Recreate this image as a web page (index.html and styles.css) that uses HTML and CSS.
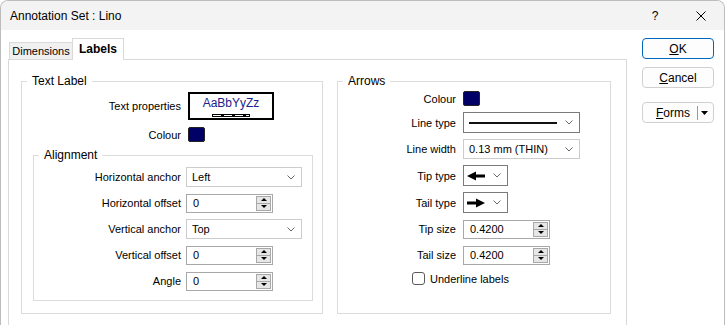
FILE: index.html
```html
<!DOCTYPE html>
<html lang="en">
<head>
    <meta charset="UTF-8">
    <title>Annotation Set : Lino</title>
    <link rel="stylesheet" href="styles.css">
</head>
<body>
    <div class="window">
        <div class="titlebar">
            <span class="title">Annotation Set : Lino</span>
            <span class="caption-btn">?</span>
            <span class="caption-btn">
                <svg width="10" height="10" viewBox="0 0 10 10"><path d="M0.5 0.5L9.5 9.5M9.5 0.5L0.5 9.5" stroke="#000" stroke-width="1"/></svg>
            </span>
        </div>

        <div class="content">
            <div class="tabs">
                <div class="tab-strip">
                    <div class="tab">Dimensions</div>
                    <div class="tab active">Labels</div>
                </div>

                <div class="tab-panel">
                    <!-- Text label group -->
                    <fieldset class="group text-label">
                        <legend>Text Label</legend>
                        <div class="row sample-row">
                            <label>Text properties</label>
                            <div class="font-sample">
                                <span>AaBbYyZz</span>
                                <span class="sample-bar"></span>
                            </div>
                        </div>
                        <div class="row colour-row">
                            <label>Colour</label>
                            <span class="swatch"></span>
                        </div>

                        <fieldset class="group alignment">
                            <legend>Alignment</legend>
                            <div class="form">
                                <div class="row">
                                    <label>Horizontal anchor</label>
                                    <div class="combo anchor"><span class="value">Left</span><svg class="chev" width="8" height="5" viewBox="0 0 8 5"><polyline points="0.5,0.5 4,4 7.5,0.5" fill="none" stroke="#666"/></svg></div>
                                </div>
                                <div class="row">
                                    <label>Horizontal offset</label>
                                    <div class="spin"><span class="value">0</span><span class="spin-btns"><span class="up"></span><span class="down"></span></span></div>
                                </div>
                                <div class="row">
                                    <label>Vertical anchor</label>
                                    <div class="combo anchor"><span class="value">Top</span><svg class="chev" width="8" height="5" viewBox="0 0 8 5"><polyline points="0.5,0.5 4,4 7.5,0.5" fill="none" stroke="#666"/></svg></div>
                                </div>
                                <div class="row">
                                    <label>Vertical offset</label>
                                    <div class="spin"><span class="value">0</span><span class="spin-btns"><span class="up"></span><span class="down"></span></span></div>
                                </div>
                                <div class="row">
                                    <label>Angle</label>
                                    <div class="spin"><span class="value">0</span><span class="spin-btns"><span class="up"></span><span class="down"></span></span></div>
                                </div>
                            </div>
                        </fieldset>
                    </fieldset>

                    <!-- Arrows group -->
                    <fieldset class="group arrows">
                        <legend>Arrows</legend>
                        <div class="form">
                            <div class="row short">
                                <label>Colour</label>
                                <span class="swatch"></span>
                            </div>
                            <div class="row tall">
                                <label>Line type</label>
                                <div class="combo dark line-combo"><span class="value"><span class="solid-line"></span></span><svg class="chev" width="8" height="5" viewBox="0 0 8 5"><polyline points="0.5,0.5 4,4 7.5,0.5" fill="none" stroke="#666"/></svg></div>
                            </div>
                            <div class="row">
                                <label>Line width</label>
                                <div class="combo line-combo"><span class="value num">0.13 mm (THIN)</span><svg class="chev" width="8" height="5" viewBox="0 0 8 5"><polyline points="0.5,0.5 4,4 7.5,0.5" fill="none" stroke="#666"/></svg></div>
                            </div>
                            <div class="row tall">
                                <label>Tip type</label>
                                <div class="combo dark small"><span class="value">
                                    <svg width="18" height="10" viewBox="0 0 18 10"><polygon points="0,5 9,0.5 9,9.5" fill="#000"/><rect x="8" y="3.5" width="10" height="3" fill="#000"/></svg>
                                </span><svg class="chev" width="8" height="5" viewBox="0 0 8 5"><polyline points="0.5,0.5 4,4 7.5,0.5" fill="none" stroke="#666"/></svg></div>
                            </div>
                            <div class="row tall">
                                <label>Tail type</label>
                                <div class="combo dark small"><span class="value">
                                    <svg width="18" height="10" viewBox="0 0 18 10"><rect x="0" y="3.5" width="10" height="3" fill="#000"/><polygon points="18,5 9,0.5 9,9.5" fill="#000"/></svg>
                                </span><svg class="chev" width="8" height="5" viewBox="0 0 8 5"><polyline points="0.5,0.5 4,4 7.5,0.5" fill="none" stroke="#666"/></svg></div>
                            </div>
                            <div class="row">
                                <label>Tip size</label>
                                <div class="spin"><span class="value">0.4200</span><span class="spin-btns"><span class="up"></span><span class="down"></span></span></div>
                            </div>
                            <div class="row">
                                <label>Tail size</label>
                                <div class="spin"><span class="value">0.4200</span><span class="spin-btns"><span class="up"></span><span class="down"></span></span></div>
                            </div>
                            <div class="check-row">
                                <span class="checkbox"></span>
                                <span>Underline labels</span>
                            </div>
                        </div>
                    </fieldset>
                </div>
            </div>

            <div class="buttons">
                <div class="btn default"><span><u>O</u>K</span></div>
                <div class="btn"><span><u>C</u>ancel</span></div>
                <div class="btn split">
                    <span><u>F</u>orms</span>
                    <span class="divider"></span>
                    <svg width="7" height="4" viewBox="0 0 7 4"><polygon points="0,0 7,0 3.5,4" fill="#000"/></svg>
                </div>
            </div>
        </div>
    </div>
</body>
</html>
```

FILE: styles.css
```css
* {
    box-sizing: border-box;
}
body {
    margin: 0;
    font-family: "Liberation Sans", Arial, sans-serif;
    font-size: 11px;
    color: #000;
    background: #fff;
}
.window {
    width: 725px;
    height: 325px;
    border: 1px solid #bcbcbc;
    border-bottom: none;
    border-radius: 8px 8px 0 0;
    overflow: hidden;
    background: #fff;
}
.titlebar {
    height: 29px;
    display: flex;
    align-items: center;
    padding-left: 9px;
    background: #f3f3f3;
    font-size: 12px;
}
.title {
    flex: 1;
}
.caption-btn {
    width: 46px;
    height: 29px;
    display: flex;
    align-items: center;
    justify-content: center;
}
.content {
    display: flex;
    padding: 8px 0 0 7px;
}
.tabs {
    width: 619px;
}
.tab-strip {
    display: flex;
    align-items: flex-end;
    height: 21px;
    padding-left: 1px;
}
.tab {
    width: 64px;
    height: 17px;
    line-height: 16px;
    text-align: center;
    border: 1px solid #d9d9d9;
    border-bottom: none;
    background: #f0f0f0;
}
.tab.active {
    width: 52px;
    height: 22px;
    line-height: 20px;
    margin-left: -1px;
    margin-bottom: -1px;
    background: #fff;
    font-weight: bold;
    font-size: 12px;
    position: relative;
}
.tab-panel {
    height: 270px;
    border: 1px solid #d9d9d9;
    border-bottom: none;
    padding: 13px 0 0 12px;
    display: flex;
    gap: 14px;
    align-items: flex-start;
}
.group {
    margin: 0;
    padding: 0;
    min-width: 0;
    border: 1px solid #dcdcdc;
}
.group legend {
    margin-left: 5px;
    padding: 0 5px;
    line-height: 16px;
    font-size: 12px;
}
.text-label {
    width: 302px;
    height: 241px;
}
.arrows {
    width: 274px;
    height: 241px;
}
.row {
    display: flex;
    align-items: center;
    height: 20px;
}
.row label {
    text-align: right;
    white-space: nowrap;
}
.text-label > .row label {
    width: 159px;
    margin-right: 7px;
}
.sample-row {
    height: 28px;
    margin-top: 3px;
}
.colour-row {
    height: 15px;
    margin-top: 7px;
}
.font-sample {
    width: 86px;
    height: 28px;
    border: 2px solid #000;
    display: flex;
    flex-direction: column;
    align-items: center;
    padding-top: 2px;
    color: #20208e;
    font-size: 12px;
    line-height: 14px;
}
.sample-bar {
    width: 38px;
    height: 3px;
    margin-top: 4px;
    border: 1px solid #000;
    background: repeating-linear-gradient(90deg, #fff 0 8px, #000 8px 11px);
}
.swatch {
    width: 17px;
    height: 15px;
    border: 1px solid #222;
    border-radius: 2px;
    background: #000066;
}
.alignment {
    width: 280px;
    height: 154px;
    margin: 5px 0 0 11px;
}
.form {
    display: flex;
    flex-direction: column;
    gap: 6px;
}
.alignment .form {
    padding-top: 4px;
}
.alignment .row label {
    width: 147px;
    margin-right: 5px;
}
.arrows .form {
    padding-top: 2px;
}
.arrows .row label {
    width: 118px;
    margin-right: 7px;
}
.row.short {
    height: 15px;
}
.row.tall {
    height: 21px;
}
.combo {
    display: flex;
    align-items: center;
    height: 20px;
    padding-left: 5px;
    border: 1px solid #cccccc;
    background: #fff;
}
.row.tall .combo {
    height: 21px;
}
.combo.dark {
    border-color: #7a7a7a;
}
.combo .value {
    flex: 1;
    display: flex;
    align-items: center;
}
.combo .chev {
    margin-right: 6px;
}
.anchor {
    width: 116px;
}
.line-combo {
    width: 117px;
}
.combo.small {
    width: 45px;
    padding-left: 3px;
}
.solid-line {
    width: 88px;
    height: 2px;
    background: #111;
}
.num,
.spin .value {
    font-size: 11px;
}
.spin {
    display: flex;
    width: 87px;
    height: 19px;
    border: 1px solid #a8a8a8;
    background: #fff;
}
.spin .value {
    flex: 1;
    padding-left: 6px;
    line-height: 17px;
}
.spin-btns {
    width: 16px;
    display: flex;
    flex-direction: column;
    padding: 1px 1px 1px 0;
}
.spin-btns span {
    flex: 1;
    display: flex;
    align-items: center;
    justify-content: center;
    border: 1px solid #a8a8a8;
    background: #e6e6e6;
}
.spin-btns .down {
    border-top: none;
}
.spin-btns .up::after,
.spin-btns .down::after {
    content: "";
    border-left: 3px solid transparent;
    border-right: 3px solid transparent;
}
.spin-btns .up::after {
    border-bottom: 3px solid #000;
}
.spin-btns .down::after {
    border-top: 3px solid #000;
}
.check-row {
    display: flex;
    align-items: center;
    gap: 5px;
    height: 15px;
    padding-left: 74px;
}
.checkbox {
    width: 13px;
    height: 13px;
    border: 1px solid #5a5a5a;
    border-radius: 3px;
    background: #fff;
}
.buttons {
    width: 72px;
    margin-left: 15px;
    display: flex;
    flex-direction: column;
}
.btn {
    height: 21px;
    display: flex;
    align-items: center;
    justify-content: center;
    border: 1px solid #d0d0d0;
    border-radius: 4px;
    background: #fdfdfd;
    font-size: 12px;
}
.btn.default {
    border-color: #0067c0;
}
.btn + .btn {
    margin-top: 8px;
}
.btn.split {
    margin-top: 14px;
    justify-content: flex-end;
    padding-right: 5px;
}
.divider {
    width: 1px;
    height: 14px;
    margin: 0 3px 0 7px;
    background: #9a9a9a;
}
```
